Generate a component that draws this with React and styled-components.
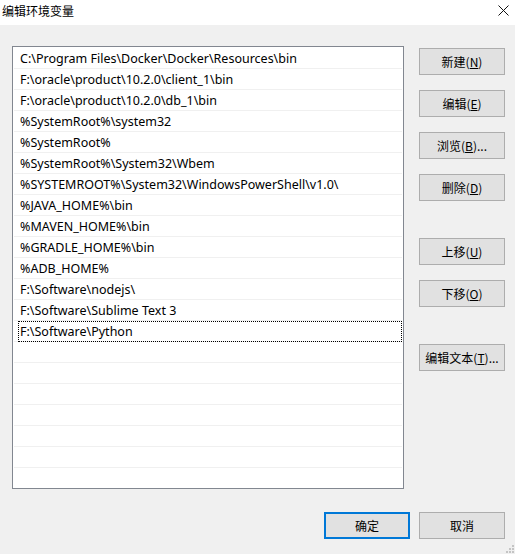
import React from "react";
import styled, { createGlobalStyle } from "styled-components";

const GlobalStyle = createGlobalStyle`
  html, body {
    margin: 0;
    padding: 0;
    background: #f0f0f0;
  }
  body {
    font-family: "Noto Sans CJK SC", "Noto Sans", sans-serif;
    font-size: 12px;
    color: #000;
  }
`;

const paths = [
  "C:\\Program Files\\Docker\\Docker\\Resources\\bin",
  "F:\\oracle\\product\\10.2.0\\client_1\\bin",
  "F:\\oracle\\product\\10.2.0\\db_1\\bin",
  "%SystemRoot%\\system32",
  "%SystemRoot%",
  "%SystemRoot%\\System32\\Wbem",
  "%SYSTEMROOT%\\System32\\WindowsPowerShell\\v1.0\\",
  "%JAVA_HOME%\\bin",
  "%MAVEN_HOME%\\bin",
  "%GRADLE_HOME%\\bin",
  "%ADB_HOME%",
  "F:\\Software\\nodejs\\",
  "F:\\Software\\Sublime Text 3",
  "F:\\Software\\Python",
];

const ROW_COUNT = 21;
const FOCUSED = 13;

const Window = styled.div`
  width: 515px;
  height: 554px;
  display: flex;
  flex-direction: column;
  background: #f0f0f0;
  overflow: hidden;
`;

const TitleBar = styled.div`
  height: 25px;
  flex: none;
  display: flex;
  align-items: center;
  justify-content: space-between;
  background: #fff;
  padding: 0 6px 0 2px;
`;

const Title = styled.span`
  font-size: 12px;
  line-height: 12px;
  margin-top: -4px;
`;

const CloseButton = styled.span`
  display: flex;
  margin-top: -5px;
`;

const Body = styled.div`
  flex: 1;
  display: flex;
  flex-direction: column;
  padding: 21px 10px 0 12px;
`;

const Main = styled.div`
  display: flex;
  gap: 15px;
`;

const PathList = styled.div`
  width: 392px;
  height: 443px;
  box-sizing: border-box;
  border: 1px solid #828790;
  background: #fff;
  padding: 1px;
  overflow: hidden;
`;

const Row = styled.div`
  position: relative;
  height: 21px;
  box-sizing: border-box;
  border-bottom: 1px solid #f0f0f0;
  padding-left: 6px;
  display: flex;
  align-items: center;
  font-family: "Noto Sans", "Noto Sans CJK SC", sans-serif;
  font-size: 12.5px;
  white-space: nowrap;

  ${(p) =>
    p.$focused &&
    `
    &::after {
      content: "";
      position: absolute;
      left: 4px;
      right: 0;
      top: 0;
      bottom: -1px;
      border: 1px dotted #000;
    }
  `}
`;

const ButtonColumn = styled.div`
  width: 86px;
  display: flex;
  flex-direction: column;
  padding-top: 2px;
`;

const ButtonGroup = styled.div`
  display: flex;
  flex-direction: column;
  gap: 15px;
  margin-top: ${(p) => p.$offset || 0}px;
`;

const Button = styled.div`
  width: 86px;
  height: 27px;
  box-sizing: border-box;
  border: ${(p) => (p.$default ? "2px solid #0078d7" : "1px solid #adadad")};
  background: #e1e1e1;
  display: flex;
  align-items: center;
  justify-content: center;
  font-size: 12px;
  white-space: nowrap;
`;

const Key = styled.span`
  text-decoration: underline;
  text-underline-offset: 1px;
`;

const Footer = styled.div`
  display: flex;
  justify-content: flex-end;
  gap: 9px;
  margin-top: 23px;
`;

const Grip = styled.svg`
  position: absolute;
  right: 1px;
  bottom: 1px;
`;

const Label = ({ text, hotkey, tail = "" }) => (
  <>
    {text}(<Key>{hotkey}</Key>){tail}
  </>
);

export default function App() {
  return (
    <>
      <GlobalStyle />
      <Window>
        <TitleBar>
          <Title>编辑环境变量</Title>
          <CloseButton>
            <svg width="11" height="11" viewBox="0 0 11 11">
              <path d="M0.5 0.5 L10.5 10.5 M10.5 0.5 L0.5 10.5" stroke="#111" strokeWidth="1" />
            </svg>
          </CloseButton>
        </TitleBar>
        <Body>
          <Main>
            <PathList>
              {Array.from({ length: ROW_COUNT }, (_, i) => (
                <Row key={i} $focused={i === FOCUSED}>
                  {paths[i] || ""}
                </Row>
              ))}
            </PathList>
            <ButtonColumn>
              <ButtonGroup>
                <Button><Label text="新建" hotkey="N" /></Button>
                <Button><Label text="编辑" hotkey="E" /></Button>
                <Button><Label text="浏览" hotkey="B" tail="..." /></Button>
                <Button><Label text="删除" hotkey="D" /></Button>
              </ButtonGroup>
              <ButtonGroup $offset={37}>
                <Button><Label text="上移" hotkey="U" /></Button>
                <Button><Label text="下移" hotkey="O" /></Button>
              </ButtonGroup>
              <ButtonGroup $offset={37}>
                <Button><Label text="编辑文本" hotkey="T" tail="..." /></Button>
              </ButtonGroup>
            </ButtonColumn>
          </Main>
          <Footer>
            <Button $default>确定</Button>
            <Button>取消</Button>
          </Footer>
        </Body>
      </Window>
      <Grip width="8" height="8" viewBox="0 0 8 8">
        {[
          [6, 0],
          [3, 3],
          [6, 3],
          [0, 6],
          [3, 6],
          [6, 6],
        ].map(([x, y]) => (
          <rect key={`${x}-${y}`} x={x} y={y} width="2" height="2" fill="#c4c4c4" />
        ))}
      </Grip>
    </>
  );
}
